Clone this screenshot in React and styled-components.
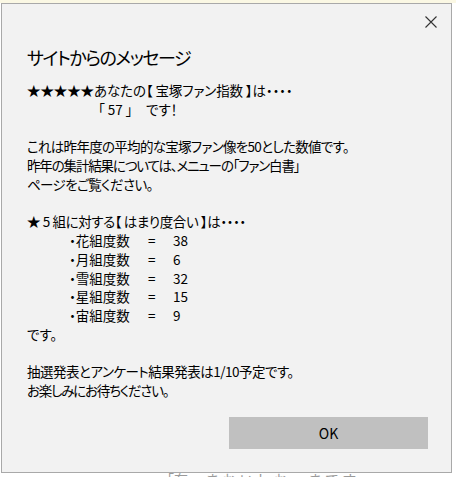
import React from "react";
import styled, { createGlobalStyle } from "styled-components";

const GlobalStyle = createGlobalStyle`
  html, body {
    margin: 0;
    padding: 0;
    background: #ffffff;
  }
  body {
    width: 456px;
    height: 477px;
    overflow: hidden;
    font-family: "Noto Sans CJK JP", "Noto Sans", sans-serif;
  }
`;

const Page = styled.div`
  position: relative;
  width: 456px;
  height: 477px;
  overflow: hidden;
  border-top: 3px solid #fbf8e4;
  box-sizing: border-box;
`;

const Dialog = styled.div`
  position: relative;
  margin-left: 1px;
  width: 451px;
  height: 470px;
  box-sizing: border-box;
  border: 1px solid #a9a9a9;
  background: #f2f2f2;
  display: flex;
  flex-direction: column;
  color: #000;
`;

const Header = styled.div`
  display: flex;
  justify-content: flex-end;
  padding: 8px 10px 0 0;
  height: 39.5px;
  box-sizing: border-box;
`;

const CloseButton = styled.button`
  width: 20px;
  height: 20px;
  border: none;
  background: transparent;
  padding: 0;
  display: flex;
  align-items: center;
  justify-content: center;
  cursor: pointer;
`;

const Title = styled.h1`
  margin: 0;
  padding: 0 0 0 25px;
  font-size: 18px;
  font-weight: 400;
  line-height: 26px;
  font-feature-settings: "palt";
  letter-spacing: -1.45px;
`;

const Body = styled.div`
  padding: 11.5px 0 0 25px;
  font-size: 13.5px;
  line-height: 18.75px;
  font-feature-settings: "palt";
  white-space: pre;
`;

const Line = styled.div`
  height: 18.75px;
  padding-left: ${(p) => p.$indent || 0}px;
  letter-spacing: ${(p) => p.$track || 0}px;
`;

const Row = styled.div`
  display: grid;
  grid-template-columns: 79px 25px auto;
  height: 18.75px;
  padding-left: 42px;
`;

const Footer = styled.div`
  display: flex;
  justify-content: flex-end;
  padding: 17px 23px 0 0;
`;

const OkButton = styled.button`
  width: 199px;
  height: 32px;
  border: none;
  background: #c0c0c0;
  font-family: "Noto Sans CJK JP", "Noto Sans", sans-serif;
  font-size: 14px;
  color: #000;
`;

const Backdrop = styled.div`
  position: absolute;
  left: 160px;
  top: 467px;
  font-size: 14px;
  line-height: 18px;
  color: #9a9a9a;
  white-space: pre;
`;

const scores = [
  ["花組度数", 38],
  ["月組度数", 6],
  ["雪組度数", 32],
  ["星組度数", 15],
  ["宙組度数", 9],
];

export default function App() {
  return (
    <>
      <GlobalStyle />
      <Page>
        <Backdrop>「在」 ま お い し お 　 ま で す 」</Backdrop>
        <Dialog>
          <Header>
            <CloseButton aria-label="close">
              <svg width="12" height="12" viewBox="0 0 12 12">
                <path d="M0.5 0.5 L11.5 11.5 M11.5 0.5 L0.5 11.5" stroke="#333" strokeWidth="1.1" />
              </svg>
            </CloseButton>
          </Header>
          <Title>サイトからのメッセージ</Title>
          <Body>
            <Line $track={-0.1}>★★★★★あなたの【 宝塚ファン指数 】は・・・・</Line>
            <Line $indent={71}>「 57 」　です！</Line>
            <Line />
            <Line $track={-0.7}>これは昨年度の平均的な宝塚ファン像を50とした数値です。</Line>
            <Line $track={-1.15}>昨年の集計結果については、メニューの「ファン白書」</Line>
            <Line $track={-0.6}>ページをご覧ください。</Line>
            <Line />
            <Line $track={-0.4}>★ 5 組に対する【 はまり度合い 】は・・・・</Line>
            {scores.map(([name, value]) => (
              <Row key={name}>
                <span>・{name}</span>
                <span>=</span>
                <span>{value}</span>
              </Row>
            ))}
            <Line>です。</Line>
            <Line />
            <Line $track={-0.5}>抽選発表とアンケート結果発表は1/10予定です。</Line>
            <Line $track={-1.2}>お楽しみにお待ちください。</Line>
          </Body>
          <Footer>
            <OkButton>OK</OkButton>
          </Footer>
        </Dialog>
      </Page>
    </>
  );
}
